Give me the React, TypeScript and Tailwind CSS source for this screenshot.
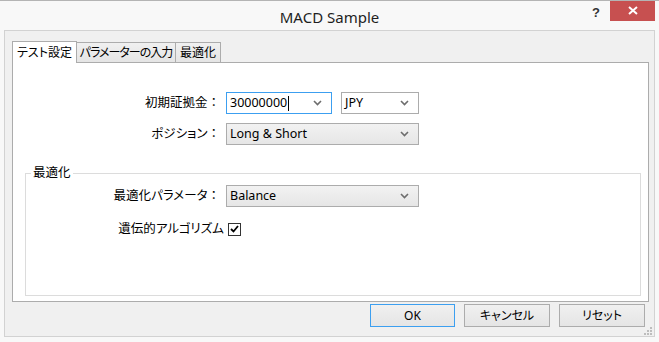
import React from "react";

const FONT = "font-['Noto_Sans','Noto_Sans_CJK_JP',sans-serif] [font-feature-settings:'palt']";

function Chevron() {
  return (
    <svg width="9" height="6" viewBox="0 0 9 6" className="shrink-0">
      <path d="M1 1 L4.5 4.5 L8 1" fill="none" stroke="#6d6d6d" strokeWidth="1.6" />
    </svg>
  );
}

function Colon() {
  return <span className="[font-feature-settings:normal]">：</span>;
}

function Combo({
  value,
  width,
  variant,
  cursor,
}: {
  value: string;
  width: string;
  variant: "edit" | "white" | "gray";
  cursor?: boolean;
}) {
  const cls =
    variant === "edit"
      ? "bg-white border-[#3c9ff0]"
      : variant === "white"
      ? "bg-white border-[#acacac]"
      : "bg-gradient-to-b from-[#f2f2f2] to-[#e6e6e6] border-[#acacac]";
  return (
    <div className={`${width} h-[22px] border ${cls} flex items-center pl-[3px] pr-[9px]`}>
      <span className="text-[12.5px] leading-none text-black">{value}</span>
      {cursor && <span className="w-px h-[15px] bg-black ml-px" />}
      <span className="flex-1" />
      <Chevron />
    </div>
  );
}

function Button({ label, primary, width }: { label: string; primary?: boolean; width: string }) {
  return (
    <div
      className={`${width} h-[23px] border ${
        primary ? "border-[#3c9ff0]" : "border-[#acacac]"
      } bg-gradient-to-b from-[#f0f0f0] to-[#e5e5e5] flex items-center justify-center text-[12px] text-black`}
    >
      {label}
    </div>
  );
}

export default function App() {
  return (
    <div className={`w-[659px] h-[342px] bg-[#f8f8f8] border-t border-[#b4b4b4] flex flex-col ${FONT} text-black overflow-hidden`}>
      {/* Title bar */}
      <div className="h-[29px] relative flex items-center justify-center shrink-0">
        <span className="text-[15px] text-[#1e1e1e] mt-[3px] font-['Noto_Sans',sans-serif]">MACD Sample</span>
        <span className="absolute left-[592px] top-[2px] text-[13px] font-bold text-[#333] font-['Liberation_Sans',sans-serif]">?</span>
        <div className="absolute left-[610px] top-[-1px] w-[45px] h-[21px] bg-[#c75050] flex items-center justify-center">
          <svg width="10" height="9" viewBox="0 0 10 9">
            <path d="M1 1 L9 8 M9 1 L1 8" stroke="#ffffff" strokeWidth="2" />
          </svg>
        </div>
      </div>

      {/* Client area */}
      <div className="ml-[4px] w-[651px] h-[307px] bg-[#f0f0f0] border border-[#d2d2d2] pl-[7px] pt-[9px] relative shrink-0">
        {/* Tabs */}
        <div className="flex items-end h-[22px] whitespace-nowrap text-[12px]">
          <div className="shrink-0 w-[65px] h-[22px] bg-white border border-b-0 border-[#acacac] flex items-center justify-center relative z-10 translate-y-[1px]">
            テスト設定
          </div>
          <div className="shrink-0 w-[99px] h-[20px] bg-gradient-to-b from-[#f0f0f0] to-[#e5e5e5] border border-b-0 border-l-0 border-[#acacac] flex items-center justify-center tracking-[-1px]">
            パラメーターの入力
          </div>
          <div className="shrink-0 w-[45px] h-[20px] bg-gradient-to-b from-[#f0f0f0] to-[#e5e5e5] border border-b-0 border-l-0 border-[#acacac] flex items-center justify-center">
            最適化
          </div>
        </div>

        {/* Tab panel */}
        <div className="w-[637px] h-[240px] bg-white border border-[#acacac] pt-[29px] flex flex-col text-[12.5px]">
          <div className="flex items-center h-[22px]">
            <div className="w-[207px] text-right whitespace-nowrap">初期証拠金<Colon /></div>
            <div className="ml-[6px] flex gap-[9px]">
              <Combo value="30000000" width="w-[106px]" variant="edit" cursor />
              <Combo value="JPY" width="w-[78px]" variant="white" />
            </div>
          </div>
          <div className="flex items-center h-[22px] mt-[9px]">
            <div className="w-[207px] text-right whitespace-nowrap">ポジション<Colon /></div>
            <div className="ml-[6px]">
              <Combo value="Long & Short" width="w-[193px]" variant="gray" />
            </div>
          </div>

          {/* Group box */}
          <div className="ml-[12px] mr-[7px] mt-[28px] h-[123px] border border-[#dcdcdc] relative pt-[11px] flex flex-col">
            <span className="absolute left-[5px] top-[-10px] bg-white px-[2px] leading-[18px]">最適化</span>
            <div className="flex items-center h-[22px]">
              <div className="w-[194px] text-right whitespace-nowrap">最適化パラメータ<Colon /></div>
              <div className="ml-[6px]">
                <Combo value="Balance" width="w-[193px]" variant="gray" />
              </div>
            </div>
            <div className="flex items-center mt-[14px] h-[16px]">
              <div className="w-[198px] text-right whitespace-nowrap">遺伝的アルゴリズム</div>
              <div className="ml-[4px] w-[13px] h-[13px] border border-[#333] bg-white flex items-center justify-center">
                <svg width="9" height="8" viewBox="0 0 9 8">
                  <path d="M1 4 L3.5 6.5 L8 1" fill="none" stroke="#000" strokeWidth="1.8" />
                </svg>
              </div>
            </div>
          </div>
        </div>

        {/* Buttons */}
        <div className="flex justify-end mt-[2px] pr-[9px] gap-[9px]">
          <Button label="OK" primary width="w-[85px]" />
          <Button label="キャンセル" width="w-[86px]" />
          <Button label="リセット" width="w-[86px]" />
        </div>

        {/* Resize grip */}
        <svg className="absolute right-[2px] bottom-[1px]" width="8" height="8" viewBox="0 0 8 8">
          <rect x="6" y="0" width="2" height="2" fill="#bdbdbd" />
          <rect x="3" y="3" width="2" height="2" fill="#bdbdbd" />
          <rect x="6" y="3" width="2" height="2" fill="#bdbdbd" />
          <rect x="0" y="6" width="2" height="2" fill="#bdbdbd" />
          <rect x="3" y="6" width="2" height="2" fill="#bdbdbd" />
          <rect x="6" y="6" width="2" height="2" fill="#bdbdbd" />
        </svg>
      </div>
    </div>
  );
}
